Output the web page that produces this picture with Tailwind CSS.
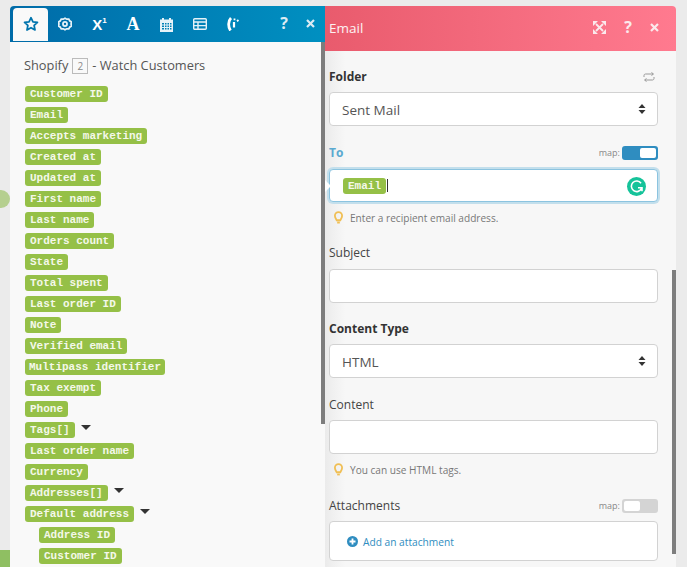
<!DOCTYPE html>
<html>
<head>
<meta charset="UTF-8"/>
<title>Email</title>
<script src="https://cdn.jsdelivr.net/npm/@tailwindcss/browser@4"></script>
</head>
<body class="relative w-[687px] h-[567px] overflow-hidden bg-[#ebebeb] font-['Open_Sans',sans-serif] text-[#333]">

<!-- canvas bits peeking out behind the panels -->
<div class="absolute left-[-8px] top-[190px] w-[18px] h-[18px] rounded-full bg-[#b5cf8f]"></div>
<div class="absolute left-0 top-[550px] w-[10px] h-[17px] bg-[#8fbf62]"></div>

<div class="flex pl-[10px] pt-[6px] h-full items-start">
  <!-- left: mapping panel -->
  <div class="relative w-[315px] h-[561px] bg-[#f9f9f9] overflow-hidden rounded-tl-[4px]">
    <div class="flex items-end h-[36px] pl-[3px] bg-gradient-to-r from-[#006ba8] to-[#0090c1] text-white">
      <div class="w-[35px] h-[33px] mb-[1px] pb-[2px] bg-[#f9f9f9] rounded-t-[4px] flex items-center justify-center">
        <svg width="16" height="16" viewBox="0 0 24 24" fill="none" stroke="#0074ad" stroke-width="2.6" stroke-linejoin="round"><path d="M12 2.5l2.9 6.2 6.8.8-5 4.7 1.3 6.8-6-3.4-6 3.4 1.3-6.8-5-4.7 6.8-.8z"/></svg>
      </div>
      <div class="w-[34px] h-[34px] pb-[2px] flex items-center justify-center">
        <svg width="14" height="14" viewBox="0 0 24 24" fill="none" stroke="#e6f2f8" stroke-width="3"><path d="M12 2l3 1.700 3.500-.2 1.600 3 2.900 2-.6 3.500.6 3.500-2.900 2-1.600 3-3.500-.2L12 22l-3-1.700-3.500.2-1.600-3-2.900-2 .6-3.500-.6-3.500 2.900-2 1.600-3 3.500.2z"/><circle cx="12" cy="12" r="3.500"/></svg>
      </div>
      <div class="w-[34px] h-[34px] pb-[2px] pl-[1px] flex items-center justify-center font-['Liberation_Sans',sans-serif] font-bold text-[15px] leading-none">X<span class="text-[8px] mb-[6px]">1</span></div>
      <div class="w-[34px] h-[34px] pb-[2px] flex items-center justify-center font-['Liberation_Serif',serif] font-bold text-[18px] leading-none">A</div>
      <div class="w-[33px] h-[34px] pb-[2px] flex items-center justify-center">
        <svg width="13" height="15" viewBox="0 0 13 15" fill="#e6f2f8"><path d="M2 1h2v1.500h5V1h2v1.500h2V15H0V2.500h2z"/><path fill="#0080b5" d="M2 6h2v1.500H2zM5 6h1.500v1.500H5zM7.500 6H9v1.500H7.500zM10 6h1.500v1.500H10zM2 8.500h2V10H2zM5 8.500h1.500V10H5zM7.500 8.500H9V10H7.500zM10 8.500h1.500V10H10zM2 11h2v1.500H2zM5 11h1.500v1.500H5zM7.500 11H9v1.500H7.500zM10 11h1.500v1.500H10z"/></svg>
      </div>
      <div class="w-[33px] h-[34px] pb-[2px] flex items-center justify-center">
        <svg width="14" height="12" viewBox="0 0 14 12" fill="none" stroke="#e6f2f8" stroke-width="1.400"><rect x=".7" y=".7" width="12.600" height="10.600" rx="1"/><path d="M.7 4h12.600M.7 7.600h12.600M5 4v7.300"/></svg>
      </div>
      <div class="w-[34px] h-[34px] pb-[2px] flex items-center justify-center">
        <svg width="14" height="14" viewBox="0 0 14 14" fill="none" stroke="#fff"><path d="M5 1C2 4 2 10 4.500 13.500" stroke-width="2.800"/><path d="M8 5v5.500" stroke-width="2.200"/><path d="M8.500 1.500v1.800M12.500 3l-1.500 1.200" stroke-width="1.800"/></svg>
      </div>
      <div class="ml-auto w-[26px] h-[34px] flex items-center justify-center font-bold text-[16px] leading-none pb-[4px] text-[#dcebf3]">?</div>
      <div class="w-[26px] h-[34px] flex items-center justify-center pb-[4px] mr-[2px]">
        <svg width="9" height="9" viewBox="0 0 9 9" stroke="#dcebf3" stroke-width="2.200"><path d="M1 1l7 7M8 1l-7 7"/></svg>
      </div>
    </div>

    <div class="pl-[14px] pt-[14px]">
      <div class="flex items-center text-[12.8px] leading-[19px] text-[#555]">Shopify
        <span class="mx-[4px] w-[16px] h-[16px] border border-[#bbb] text-[#888] text-[10px] leading-[14px] text-center">2</span> - Watch Customers</div>
      <div class="mt-[11px] flex flex-col gap-[5px] items-start font-['Liberation_Mono',monospace] font-bold text-[11px] leading-[16px] text-[#f4f8ea] ml-[1px]">
        <span class="bg-[#95c047] rounded-[3px] px-[5px] h-[16px]">Customer ID</span>
        <span class="bg-[#95c047] rounded-[3px] px-[5px] h-[16px]">Email</span>
        <span class="bg-[#95c047] rounded-[3px] px-[5px] h-[16px]">Accepts marketing</span>
        <span class="bg-[#95c047] rounded-[3px] px-[5px] h-[16px]">Created at</span>
        <span class="bg-[#95c047] rounded-[3px] px-[5px] h-[16px]">Updated at</span>
        <span class="bg-[#95c047] rounded-[3px] px-[5px] h-[16px]">First name</span>
        <span class="bg-[#95c047] rounded-[3px] px-[5px] h-[16px]">Last name</span>
        <span class="bg-[#95c047] rounded-[3px] px-[5px] h-[16px]">Orders count</span>
        <span class="bg-[#95c047] rounded-[3px] px-[5px] h-[16px]">State</span>
        <span class="bg-[#95c047] rounded-[3px] px-[5px] h-[16px]">Total spent</span>
        <span class="bg-[#95c047] rounded-[3px] px-[5px] h-[16px]">Last order ID</span>
        <span class="bg-[#95c047] rounded-[3px] px-[5px] h-[16px]">Note</span>
        <span class="bg-[#95c047] rounded-[3px] px-[5px] h-[16px]">Verified email</span>
        <span class="bg-[#95c047] rounded-[3px] px-[4px] h-[16px]">Multipass identifier</span>
        <span class="bg-[#95c047] rounded-[3px] px-[5px] h-[16px]">Tax exempt</span>
        <span class="bg-[#95c047] rounded-[3px] px-[5px] h-[16px]">Phone</span>
        <div class="flex items-start"><span class="bg-[#95c047] rounded-[3px] px-[5px] h-[16px]">Tags[]</span><span class="ml-[6px] mt-[3px] w-0 h-0 border-x-[5px] border-x-transparent border-t-[5px] border-t-[#333]"></span></div>
        <span class="bg-[#95c047] rounded-[3px] px-[5px] h-[16px]">Last order name</span>
        <span class="bg-[#95c047] rounded-[3px] px-[5px] h-[16px]">Currency</span>
        <div class="flex items-start"><span class="bg-[#95c047] rounded-[3px] px-[5px] h-[16px]">Addresses[]</span><span class="ml-[6px] mt-[3px] w-0 h-0 border-x-[5px] border-x-transparent border-t-[5px] border-t-[#333]"></span></div>
        <div class="flex items-start"><span class="bg-[#95c047] rounded-[3px] px-[5px] h-[16px]">Default address</span><span class="ml-[6px] mt-[3px] w-0 h-0 border-x-[5px] border-x-transparent border-t-[5px] border-t-[#333]"></span></div>
        <span class="ml-[14px] bg-[#95c047] rounded-[3px] px-[5px] h-[16px]">Address ID</span>
        <span class="ml-[14px] bg-[#95c047] rounded-[3px] px-[5px] h-[16px]">Customer ID</span>
      </div>
    </div>
    <!-- scrollbar -->
    <div class="absolute right-0 top-[36px] w-[4px] h-[382px] bg-[#7d7d7d]"></div>
  </div>

  <!-- right: Email module panel -->
  <div class="relative w-[351px] h-[561px] bg-[#f7f7f7] overflow-hidden rounded-tr-[4px]">
    <div class="absolute left-0 top-[45px] w-[20px] h-[516px] bg-gradient-to-r from-[#ebebeb] to-[#f7f7f7]"></div>
    <div class="relative flex items-center h-[45px] pl-[4px] bg-gradient-to-r from-[#e95b6d] to-[#ff7a8f] text-white">
      <span class="text-[13.5px] font-medium text-[#fdf1f2]">Email</span>
      <div class="ml-auto flex items-center gap-[18px] pr-[17px] mt-[-3px]">
        <svg width="13" height="13" viewBox="0 0 13 13" fill="none" stroke="#fbe9ec" stroke-width="1.800"><path d="M3 3l7 7M10 3l-7 7"/><path fill="#fbe9ec" stroke="none" d="M0 0h5L0 5zM13 0v5L8 0zM0 13V8l5 5zM13 13H8l5-5z"/></svg>
        <span class="font-bold text-[16px] leading-none text-[#fbe9ec]">?</span>
        <svg width="9" height="9" viewBox="0 0 9 9" stroke="#fbe9ec" stroke-width="2.200"><path d="M1 1l7 7M8 1l-7 7"/></svg>
      </div>
    </div>

    <div class="relative pl-[4px] pr-[18px]">
      <!-- Folder -->
      <div class="flex items-center justify-between h-[20px] mt-[16px]">
        <span class="text-[12px] font-bold text-[#333]">Folder</span>
        <svg class="mr-[3px]" width="12" height="10" viewBox="0 0 12 10" fill="none" stroke="#999" stroke-width="1"><path d="M1 5V3.500C1 2.500 1.800 2 2.500 2H10M8.500.5L10.500 2 8.500 3.500M11 5v1.500C11 7.500 10.200 8 9.500 8H2M3.500 6.500L1.500 8l2 1.500"/></svg>
      </div>
      <div class="mt-[5px] h-[34px] bg-white border border-[#d2d2d2] rounded-[4px] flex items-center justify-between pl-[12px] pr-[11px] text-[13.5px] text-[#555]">
        <span class="mt-[2px]">Sent Mail</span>
        <svg width="8" height="12" viewBox="0 0 8 12" fill="#333"><path d="M4 1l3.500 4h-7zM4 11L.5 7h7z"/></svg>
      </div>

      <!-- To -->
      <div class="flex items-center justify-between h-[16px] mt-[19px]">
        <span class="text-[12px] font-bold text-[#5aa9d0]">To</span>
        <div class="flex items-center gap-[2px]">
          <span class="text-[9px] text-[#888]">map:</span>
          <div class="w-[36px] h-[14px] rounded-[3px] bg-[#2f8dc0] flex justify-end p-[2px]"><div class="w-[16px] h-[10px] bg-white rounded-[2px]"></div></div>
        </div>
      </div>
      <div class="relative mt-[8px] h-[33px] bg-white border border-[#8cc4e0] rounded-[4px] shadow-[0_0_0_2px_#c3dfec] flex items-center pl-[13px]">
        <span class="font-['Liberation_Mono',monospace] font-bold text-[11px] leading-[16px] text-[#f4f8ea] bg-[#95c047] rounded-[3px] px-[5px] h-[16px]">Email</span>
        <span class="ml-[1px] w-[1px] h-[13px] bg-[#333]"></span>
        <div class="absolute left-[-5px] top-[10px] w-0 h-0 border-y-[6px] border-y-transparent border-l-[6px] border-l-white"></div>
        <div class="absolute right-[11px] top-[7px] w-[19px] h-[19px] rounded-full bg-[#15c39a] flex items-center justify-center">
          <svg width="13" height="13" viewBox="0 0 13 13" fill="none" stroke="#fff" stroke-width="1.600"><path d="M11 3.200A5.300 5.300 0 1 0 11.500 8.500M8 7.800h4v3.500"/></svg>
        </div>
      </div>
      <div class="flex items-center h-[18px] mt-[7px] pl-[5px] text-[10.1px] text-[#777]">
        <svg width="9" height="14" viewBox="0 0 10 15" fill="none" stroke="#f0bf55" stroke-width="2"><path d="M3 10C2.500 8.500 1 7.500 1 5a4 4 0 0 1 8 0c0 2.500-1.500 3.500-2 5z"/><path d="M3.500 12.500h3" stroke-width="2"/></svg>
        <span class="ml-[7px] mt-[2px]">Enter a recipient email address.</span>
      </div>

      <!-- Subject -->
      <div class="text-[12px] text-[#444] h-[20px] leading-[20px] mt-[16px]">Subject</div>
      <div class="mt-[6px] h-[34px] bg-white border border-[#d2d2d2] rounded-[4px]"></div>

      <!-- Content Type -->
      <div class="text-[12px] font-bold text-[#333] h-[20px] leading-[20px] mt-[16px]">Content Type</div>
      <div class="mt-[5px] h-[34px] bg-white border border-[#d2d2d2] rounded-[4px] flex items-center justify-between pl-[12px] pr-[11px] text-[13.5px] text-[#555]">
        <span class="mt-[2px]">HTML</span>
        <svg width="8" height="12" viewBox="0 0 8 12" fill="#333"><path d="M4 1l3.500 4h-7zM4 11L.5 7h7z"/></svg>
      </div>

      <!-- Content -->
      <div class="text-[12px] text-[#444] h-[20px] leading-[20px] mt-[17px]">Content</div>
      <div class="mt-[5px] h-[34px] bg-white border border-[#d2d2d2] rounded-[4px]"></div>
      <div class="flex items-center h-[18px] mt-[7px] pl-[5px] text-[10.1px] text-[#777]">
        <svg width="9" height="14" viewBox="0 0 10 15" fill="none" stroke="#f0bf55" stroke-width="2"><path d="M3 10C2.500 8.500 1 7.500 1 5a4 4 0 0 1 8 0c0 2.500-1.500 3.500-2 5z"/><path d="M3.500 12.500h3" stroke-width="2"/></svg>
        <span class="ml-[7px] mt-[2px]">You can use HTML tags.</span>
      </div>

      <!-- Attachments -->
      <div class="flex items-center justify-between h-[20px] mt-[17px]">
        <span class="text-[12px] text-[#444]">Attachments</span>
        <div class="flex items-center gap-[2px]">
          <span class="text-[9px] text-[#888]">map:</span>
          <div class="w-[36px] h-[14px] rounded-[3px] bg-[#d4d4d4] flex justify-start p-[2px]"><div class="w-[16px] h-[10px] bg-white rounded-[2px]"></div></div>
        </div>
      </div>
      <div class="mt-[5px] h-[40px] bg-white border border-[#d2d2d2] rounded-[4px] flex items-center pl-[17px] text-[10.2px] text-[#2f8dc0]">
        <svg width="11" height="11" viewBox="0 0 11 11"><circle cx="5.500" cy="5.500" r="5.500" fill="#2f8dc0"/><path d="M5.500 2.500v6M2.500 5.500h6" stroke="#fff" stroke-width="1.800"/></svg>
        <span class="ml-[5px] mt-[3px]">Add an attachment</span>
      </div>
    </div>
    <!-- scrollbar -->
    <div class="absolute right-0 top-[264px] w-[4px] h-[284px] bg-[#7d7d7d]"></div>
  </div>
</div>
</body>
</html>
